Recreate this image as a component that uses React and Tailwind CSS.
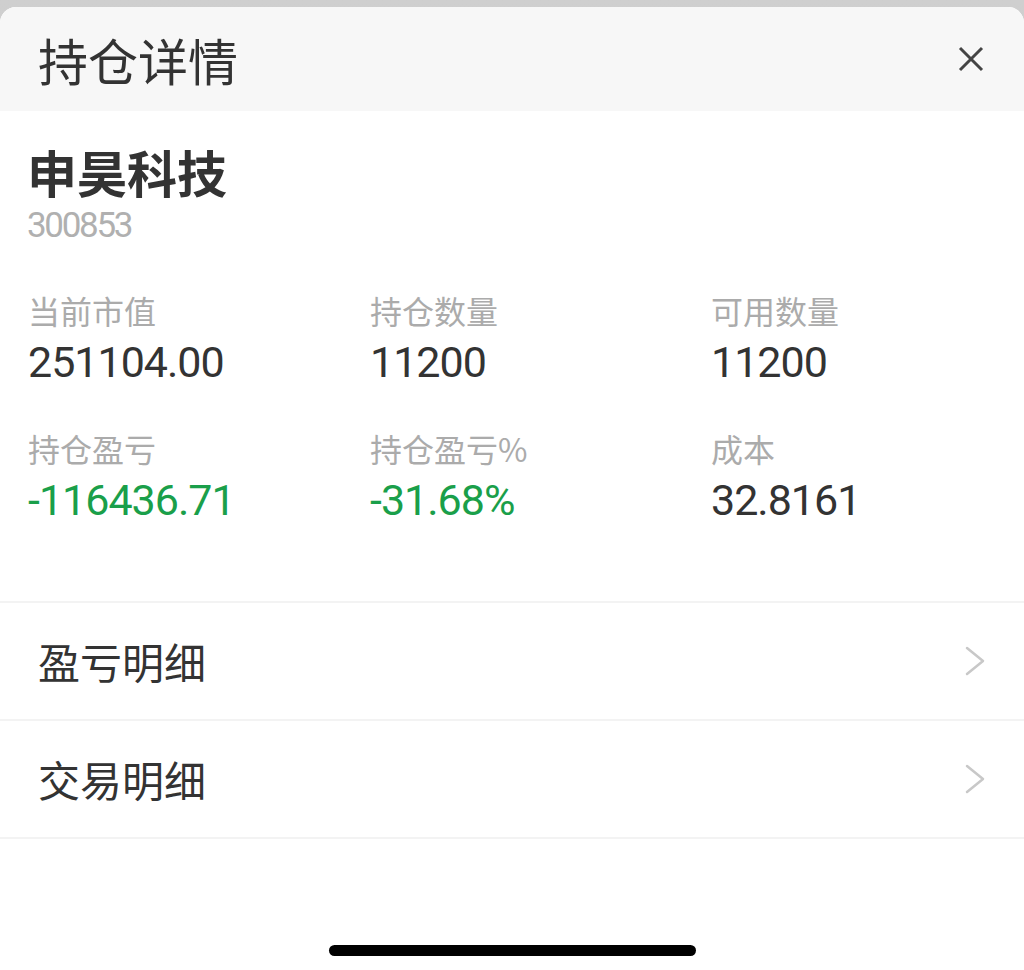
const cjk = { fontFamily: '"Noto Sans CJK SC", "Noto Sans", sans-serif' };
const num = { fontFamily: '"Roboto", "Liberation Sans", sans-serif' };

const stats = [
  { label: "当前市值", value: "251104.00" },
  { label: "持仓数量", value: "11200" },
  { label: "可用数量", value: "11200" },
  { label: "持仓盈亏", value: "-116436.71", green: true },
  { label: "持仓盈亏%", value: "-31.68%", green: true },
  { label: "成本", value: "32.8161" },
];

function Chevron() {
  return (
    <svg width="22" height="32" viewBox="0 0 22 32" fill="none">
      <polyline points="3,3 19,16 3,29" stroke="#c8c8c8" strokeWidth="2.5" strokeLinecap="round" strokeLinejoin="round" />
    </svg>
  );
}

function LinkRow({ title }) {
  return (
    <div className="flex h-[118px] items-center justify-between border-b-2 border-[#f3f3f3] pl-[38px] pr-[38px]">
      <span className="text-[42px] leading-none text-[#333]" style={cjk}>{title}</span>
      <Chevron />
    </div>
  );
}

export default function App() {
  return (
    <div className="h-[970px] overflow-hidden bg-gradient-to-b from-[#cfcfcf] to-[#bdbdbd] pt-[7px]">
      <div className="flex h-[963px] flex-col overflow-hidden rounded-t-[16px] bg-white">
        <div className="flex h-[104px] shrink-0 items-center justify-between bg-[#f7f7f7] pl-[38px] pr-[40px]">
          <h1 className="text-[50px] leading-none text-[#333]" style={cjk}>持仓详情</h1>
          <svg width="26" height="26" viewBox="0 0 26 26" fill="none">
            <path d="M2 2 L24 24 M24 2 L2 24" stroke="#444" strokeWidth="3" />
          </svg>
        </div>

        <div className="px-[27px] pt-[35px]">
          <div className="text-[50px] font-bold leading-none text-[#333]" style={cjk}>申昊科技</div>
          <div className="mt-[12px] text-[35px] leading-none tracking-[-2.3px] text-[#b0b0b0]" style={num}>300853</div>
        </div>

        <div className="mt-[51px] grid grid-cols-[342px_341px_1fr] gap-y-[48px] px-[28px]">
          {stats.map((s) => (
            <div key={s.label}>
              <div className="text-[32px] leading-none text-[#ababab]" style={cjk}>{s.label}</div>
              <div
                className={"mt-[15px] text-[43px] leading-none tracking-[-1px] " + (s.green ? "text-[#1a9f4a]" : "text-[#333]")}
                style={num}
              >
                {s.value}
              </div>
            </div>
          ))}
        </div>

        <div className="mt-[79px] border-t-2 border-[#f3f3f3]">
          <LinkRow title="盈亏明细" />
          <LinkRow title="交易明细" />
        </div>

        <div className="flex flex-1 items-end justify-center pb-[14px]">
          <div className="h-[11px] w-[367px] rounded-full bg-black" />
        </div>
      </div>
    </div>
  );
}
